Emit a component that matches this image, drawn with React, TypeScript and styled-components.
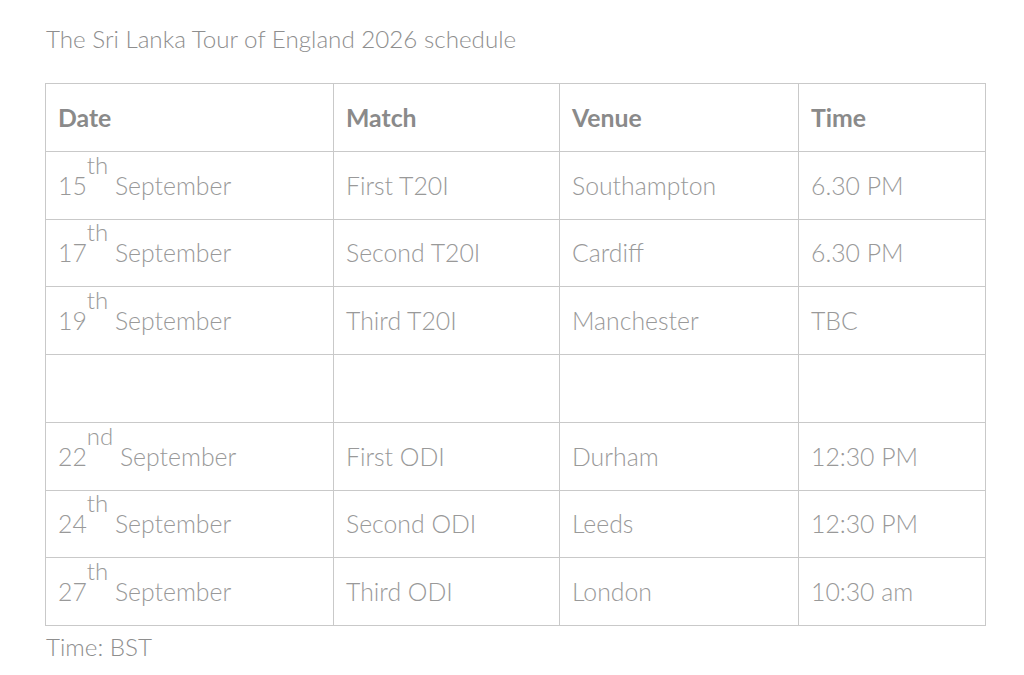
import React from "react";
import styled, { createGlobalStyle } from "styled-components";

const Global = createGlobalStyle`
  html, body { margin: 0; padding: 0; background: #fff; }
  body { font-family: Lato, "Open Sans", sans-serif; }
`;

const Page = styled.div`
  padding: 24px 0 0 45px;
  width: 940px;
`;

const Title = styled.div`
  font-size: 24.2px;
  font-weight: 300;
  color: #8e8e8e;
  line-height: 30px;
  padding-left: 1px;
  margin-bottom: 29px;
`;

const Table = styled.table`
  border-collapse: collapse;
  width: 941px;
  table-layout: fixed;
`;

const Row = styled.tr`
  height: 67.75px;
`;

const Cell = styled.td<{ $head?: boolean }>`
  border: 1px solid #c9c9c9;
  padding: 0 0 0 12px;
  font-size: 24.8px;
  font-weight: ${(p) => (p.$head ? 700 : 300)};
  color: ${(p) => (p.$head ? "#8a8a8a" : "#999999")};
  vertical-align: middle;
  white-space: nowrap;
`;

const Sup = styled.sup`
  font-size: 24px;
  vertical-align: 0;
  position: relative;
  top: -21px;
  line-height: 0;
`;

const Note = styled.div`
  font-size: 24.2px;
  font-weight: 300;
  color: #8e8e8e;
  padding: 6px 0 0 1px;
`;

type R = { d: string; s: string; m: string; v: string; t: string } | null;
const data: R[] = [
  { d: "15", s: "th", m: "First T20I", v: "Southampton", t: "6.30 PM" },
  { d: "17", s: "th", m: "Second T20I", v: "Cardiff", t: "6.30 PM" },
  { d: "19", s: "th", m: "Third T20I", v: "Manchester", t: "TBC" },
  null,
  { d: "22", s: "nd", m: "First ODI", v: "Durham", t: "12:30 PM" },
  { d: "24", s: "th", m: "Second ODI", v: "Leeds", t: "12:30 PM" },
  { d: "27", s: "th", m: "Third ODI", v: "London", t: "10:30 am" },
];

export default function App() {
  return (
    <Page>
      <Global />
      <Title>The Sri Lanka Tour of England 2026 schedule</Title>
      <Table>
        <colgroup>
          <col style={{ width: 288 }} />
          <col style={{ width: 226 }} />
          <col style={{ width: 239 }} />
          <col style={{ width: 187 }} />
        </colgroup>
        <tbody>
          <Row>
            <Cell $head>Date</Cell>
            <Cell $head>Match</Cell>
            <Cell $head>Venue</Cell>
            <Cell $head>Time</Cell>
          </Row>
          {data.map((r, i) =>
            r ? (
              <Row key={i}>
                <Cell>
                  {r.d}
                  <Sup>{r.s}</Sup> September
                </Cell>
                <Cell>{r.m}</Cell>
                <Cell>{r.v}</Cell>
                <Cell>{r.t}</Cell>
              </Row>
            ) : (
              <Row key={i}>
                <Cell />
                <Cell />
                <Cell />
                <Cell />
              </Row>
            )
          )}
        </tbody>
      </Table>
      <Note>Time: BST</Note>
    </Page>
  );
}
